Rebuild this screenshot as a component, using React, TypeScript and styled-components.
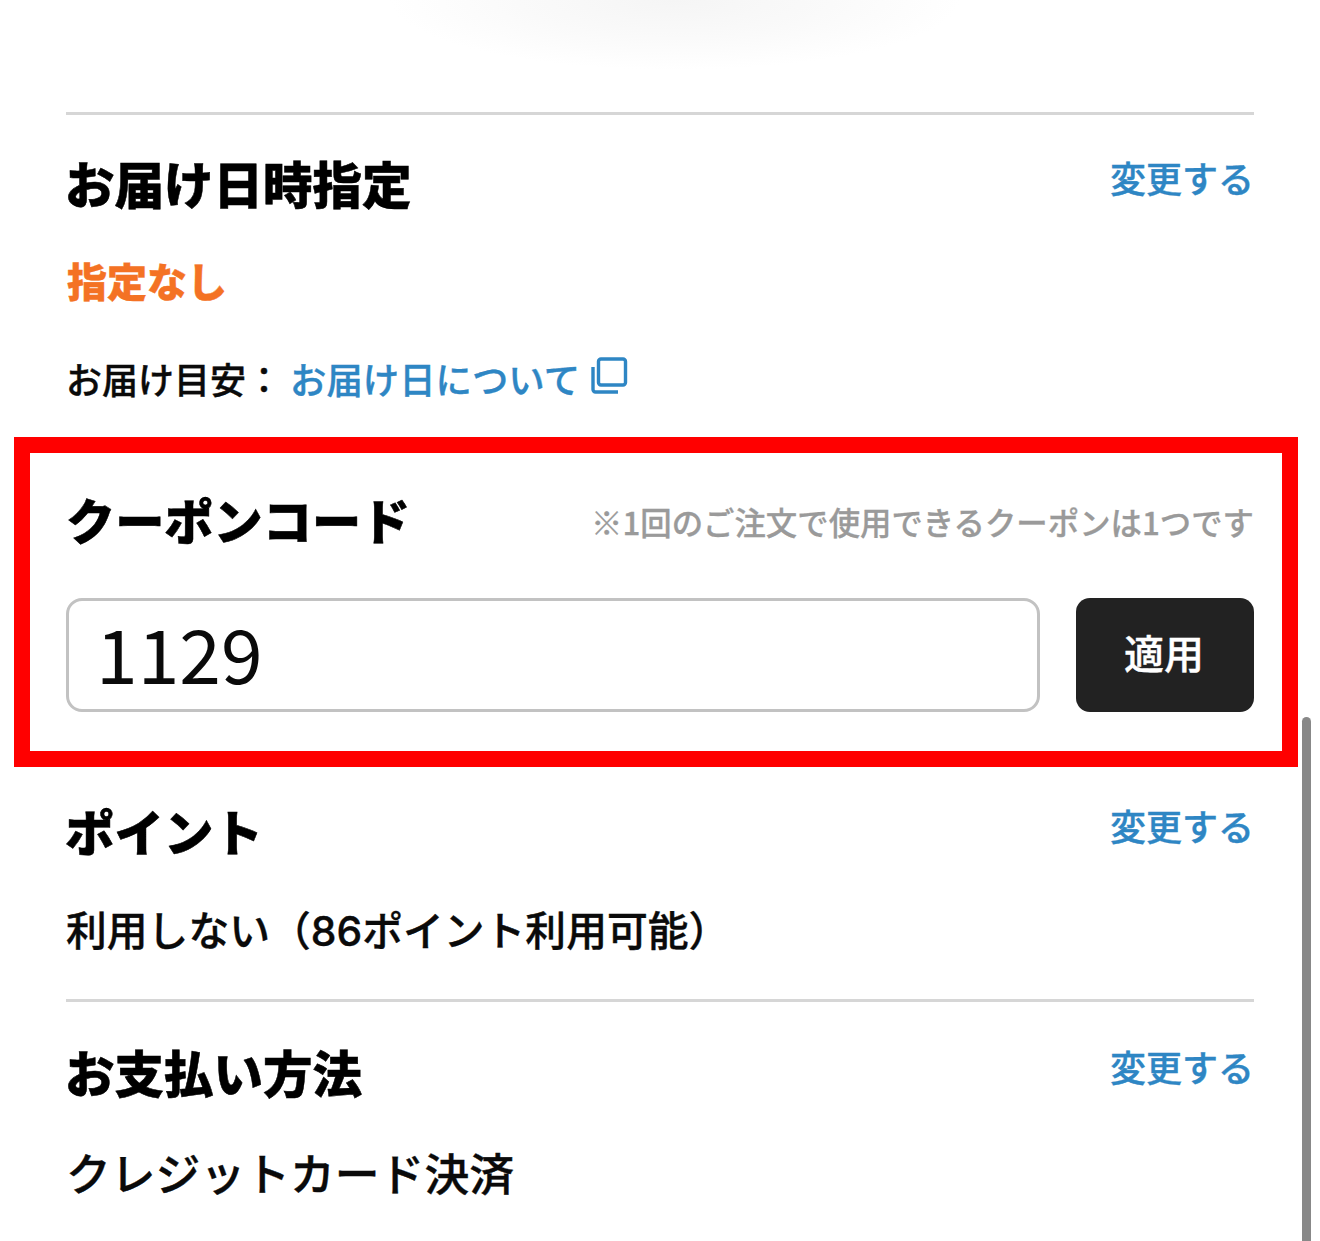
import React from "react";
import styled, { createGlobalStyle } from "styled-components";

const Global = createGlobalStyle`
  html, body { margin: 0; padding: 0; background: #fff; }
  body { font-family: "Noto Sans CJK JP", "Noto Sans", sans-serif; color: #000; overflow: hidden; }
`;

const Page = styled.main`
  position: relative;
  width: 1320px;
  height: 1241px;
  overflow: hidden;
  padding: 112px 66px 0;
  box-sizing: border-box;
`;

const TopGlow = styled.div`
  position: absolute;
  left: 390px;
  top: -70px;
  width: 570px;
  height: 140px;
  background: radial-gradient(closest-side, #f5f5f5 0%, #fafafa 55%, #ffffff 100%);
`;

const Divider = styled.hr`
  margin: 0;
  border: 0;
  height: 3px;
  background: #d6d6d6;
`;

const Section = styled.section<{ $pad: string }>`
  padding: ${(p) => p.$pad};
`;

const HeadRow = styled.div`
  display: flex;
  justify-content: space-between;
  align-items: flex-start;
`;

const Title = styled.h2`
  margin: 0 0 0 -1px;
  font-size: 49.5px;
  line-height: 70px;
  font-weight: 900;
  color: #000;
  -webkit-text-stroke: 0.5px #000;
`;

const CouponTitle = styled(Title)`
  margin: 0;
  font-size: 49.2px;
`;

const ChangeLink = styled.a`
  font-size: 36px;
  line-height: 50px;
  color: #2e86c4;
  font-weight: 500;
  margin: 4px 0 0 0;
  -webkit-text-stroke: 0.4px #2e86c4;
`;

const Orange = styled.p`
  margin: 33px 0 0 1px;
  font-size: 40px;
  line-height: 58px;
  font-weight: 900;
  color: #f47224;
  -webkit-text-stroke: 0.4px #f47224;
`;

const Body = styled.p<{ $size: number; $top: number }>`
  display: flex;
  align-items: center;
  margin: ${(p) => p.$top}px 0 0 0;
  font-size: ${(p) => p.$size}px;
  line-height: 52px;
  font-weight: 500;
  color: #0a0a0a;
  -webkit-text-stroke: 0.4px currentColor;
`;

const Digits = styled.span`
  font-family: Inter, "Liberation Sans", sans-serif;
  font-weight: 500;
  line-height: 1;
`;

const InlineLink = styled.a`
  display: inline-flex;
  align-items: center;
  color: #2e86c4;
  font-size: 36.4px;
  font-weight: 500;
  margin-left: 8px;
`;

const CouponFrame = styled.section`
  margin: 33px -44px 0 -52px;
  border: 16px solid #ff0000;
  padding: 31px 28px 39px 36px;
  height: 330px;
  box-sizing: border-box;
`;

const CouponHead = styled.div`
  display: flex;
  justify-content: space-between;
  align-items: center;
`;

const Note = styled.span`
  font-size: 31.4px;
  line-height: 44px;
  margin-top: 6px;
  color: #9a9a9a;
  font-weight: 500;
  -webkit-text-stroke: 0.3px #9a9a9a;
`;

const CouponRow = styled.div`
  display: flex;
  gap: 36px;
  margin-top: 44px;
`;

const CodeInput = styled.input`
  flex: 1;
  min-width: 0;
  height: 114px;
  box-sizing: border-box;
  border: 3px solid #c2c2c2;
  border-radius: 16px;
  padding: 0 0 8px 27px;
  font-family: "Noto Sans CJK JP", "Noto Sans", sans-serif;
  font-size: 75px;
  color: #0a0a0a;
  background: #fff;
  outline: none;
`;

const ApplyButton = styled.button`
  width: 178px;
  height: 114px;
  border: 0;
  border-radius: 14px;
  padding: 0 2px 6px 0;
  background: #222;
  color: #fff;
  font-family: "Noto Sans CJK JP", "Noto Sans", sans-serif;
  font-size: 40px;
  font-weight: 500;
  -webkit-text-stroke: 0.4px #fff;
`;

const ScrollThumb = styled.div`
  position: absolute;
  left: 1302px;
  top: 717px;
  bottom: -10px;
  width: 9px;
  border-radius: 5px;
  background: #888;
`;

const CopyIcon = () => (
  <svg width="38" height="38" viewBox="0 0 38 38" fill="none" stroke="#2e86c4" strokeWidth="3.4" style={{ marginLeft: 10, marginTop: -5 }}>
    <rect x="8.5" y="2" width="27" height="26" rx="2.5" />
    <path d="M3 10v22.5a2.5 2.5 0 0 0 2.5 2.5H28" />
  </svg>
);

export default function App() {
  return (
    <Page>
      <Global />
      <TopGlow />
      <Divider />
      <Section $pad="33px 0 0">
        <HeadRow>
          <Title>お届け日時指定</Title>
          <ChangeLink>変更する</ChangeLink>
        </HeadRow>
        <Orange>指定なし</Orange>
        <Body $size={36} $top={43}>
          お届け目安：
          <InlineLink>
            お届け日について
            <CopyIcon />
          </InlineLink>
        </Body>
      </Section>
      <CouponFrame>
        <CouponHead>
          <CouponTitle>クーポンコード</CouponTitle>
          <Note>※1回のご注文で使用できるクーポンは1つです</Note>
        </CouponHead>
        <CouponRow>
          <CodeInput defaultValue="1129" readOnly />
          <ApplyButton>適用</ApplyButton>
        </CouponRow>
      </CouponFrame>
      <Section $pad="29px 0 0">
        <HeadRow>
          <Title>ポイント</Title>
          <ChangeLink>変更する</ChangeLink>
        </HeadRow>
        <Body $size={40.8} $top={37}>
          <span>利用しない（<Digits>86</Digits>ポイント利用可能）</span>
        </Body>
      </Section>
      <Section $pad="44px 0 0">
        <Divider />
      </Section>
      <Section $pad="35px 0 0">
        <HeadRow>
          <Title>お支払い方法</Title>
          <ChangeLink>変更する</ChangeLink>
        </HeadRow>
        <Body $size={44.8} $top={39}>クレジットカード決済</Body>
      </Section>
      <ScrollThumb />
    </Page>
  );
}
